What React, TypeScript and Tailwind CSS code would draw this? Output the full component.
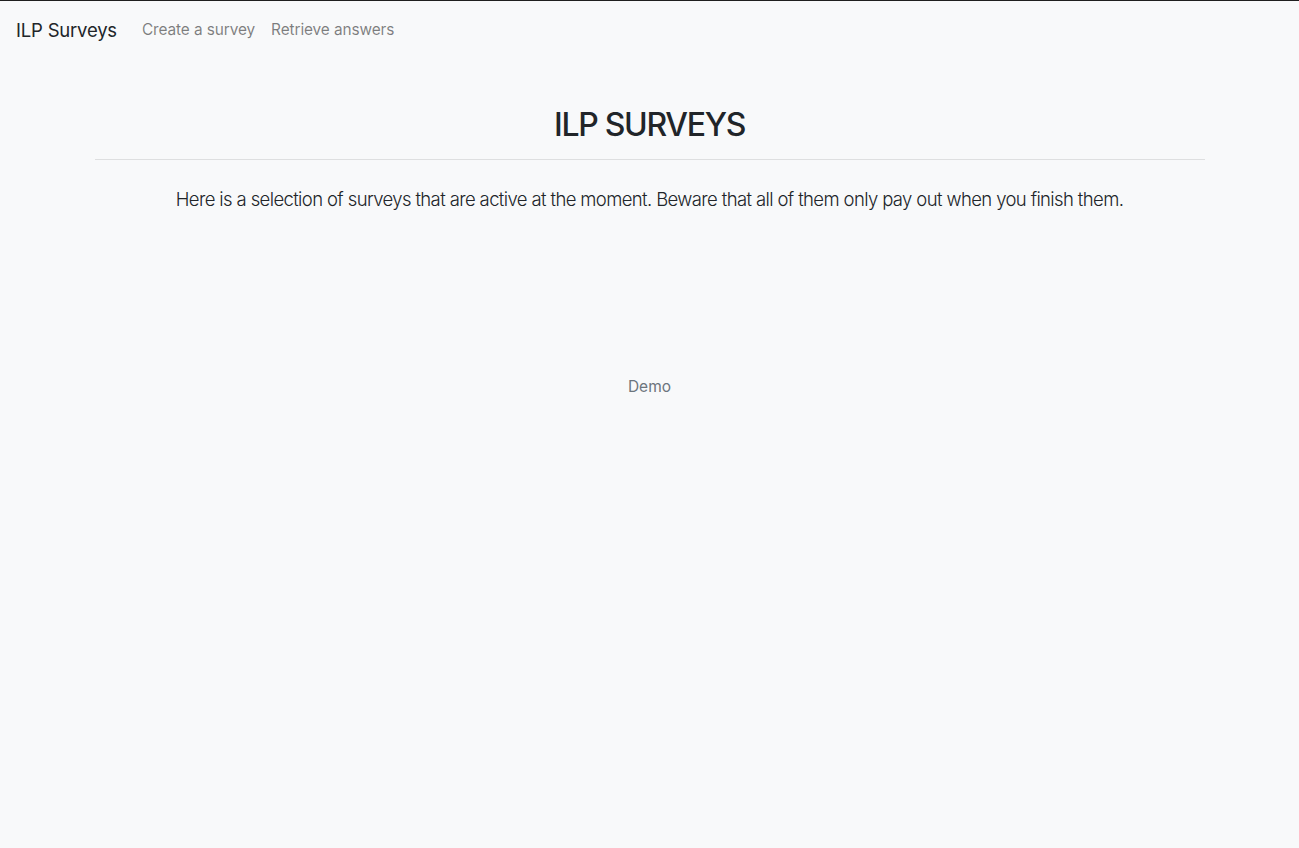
export default function App() {
  return (
    <div
      className="min-h-[848px] bg-[#f8f9fa] border-t border-[#1f1f1f] text-[#212529]"
      style={{ fontFamily: "Inter, 'Noto Sans', sans-serif" }}
    >
      {/* Navbar */}
      <nav className="flex items-center h-[58px] px-4">
        <a className="text-[18.5px] leading-[30px] text-[#212529] mr-[17px] tracking-[-0.2px]">ILP Surveys</a>
        <div className="flex items-center">
          <a className="text-[15.4px] px-2 text-[rgba(0,0,0,0.5)] tracking-[-0.1px]">Create a survey</a>
          <a className="text-[15.4px] px-2 text-[rgba(0,0,0,0.5)] tracking-[-0.1px]">Retrieve answers</a>
        </div>
      </nav>

      {/* Content */}
      <main className="max-w-[1110px] mx-auto">
        <h1 className="text-center text-[32px] font-medium leading-[40px] mt-[46px] tracking-[-1.3px]">ILP SURVEYS</h1>
        <hr className="mt-[14px] border-t border-[rgba(0,0,0,0.1)]" />
        <p className="text-center text-[18.5px] font-light leading-[30px] mt-[24px] tracking-[-0.62px]">
          Here is a selection of surveys that are active at the moment. Beware that all of them only pay out when you finish them.
        </p>
        <div className="text-center text-[15.5px] text-[#6c757d] mt-[161px]">Demo</div>
      </main>
    </div>
  );
}
